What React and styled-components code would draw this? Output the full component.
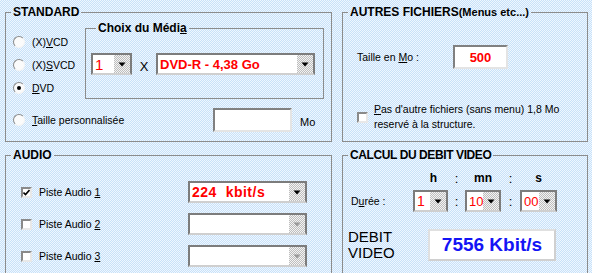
import React from 'react';
import styled, { createGlobalStyle } from 'styled-components';

const GlobalStyle = createGlobalStyle`
  html, body { margin: 0; padding: 0; }
  body { font-family: "Liberation Sans", Arial, sans-serif; }
`;

const Window = styled.div`
  width: 592px;
  height: 273px;
  overflow: hidden;
  box-sizing: border-box;
  padding: 5px 4px 0 5px;
  display: grid;
  grid-template-columns: 327px 246px;
  grid-template-rows: 137px 140px;
  column-gap: 10px;
  row-gap: 6px;
  background-color: #dbeaf9;
  background-image: repeating-conic-gradient(#c8e1f8 0 25%, #eff7ff 0 50%);
  background-size: 2px 2px;
  font-size: 10.5px;
  color: #000;
`;

const Group = styled.fieldset`
  margin: 0;
  padding: 0;
  min-width: 0;
  height: 100%;
  box-sizing: border-box;
  border: 1px solid #8c8c8c;
`;

const Legend = styled.legend`
  margin-left: 5px;
  padding: 0 2px;
  font: bold 12px/14px "Liberation Sans", Arial, sans-serif;
  letter-spacing: ${(p) => (p.$tight ? '-0.4px' : '0')};
  white-space: nowrap;
`;

const Small = styled.span`
  font-size: 11px;
`;

/* ---------- controls ---------- */

const SelectBox = styled.div`
  width: ${(p) => p.$width}px;
  height: 22px;
  box-sizing: border-box;
  display: flex;
  background: #fff;
  border: 2px solid;
  border-color: #7c7c7c #7c7c7c #cfcfcf #7c7c7c;
`;

const SelectValue = styled.div`
  flex: 1;
  display: flex;
  align-items: center;
  padding-left: 2px;
  overflow: hidden;
  white-space: pre;
  color: #ff0000;
  font-size: ${(p) => p.$size || 13}px;
  font-weight: ${(p) => (p.$bold ? 'bold' : 'normal')};
  letter-spacing: ${(p) => p.$spacing || 0}px;
`;

const SelectButton = styled.div`
  width: 16px;
  display: flex;
  align-items: center;
  justify-content: center;
  background-color: #dcdcdc;
  background-image: repeating-conic-gradient(#bdbdbd 0 25%, #f4f4f4 0 50%);
  background-size: 2px 2px;
`;

const Arrow = ({ disabled }) => (
  <svg width="8" height="5" viewBox="0 0 8 5">
    <polygon points="0.5,0.5 7.5,0.5 4,4.5" fill={disabled ? '#9a9a9a' : '#000'} />
  </svg>
);

const Select = ({ width, value, size, bold, spacing, disabled }) => (
  <SelectBox $width={width}>
    <SelectValue $size={size} $bold={bold} $spacing={spacing}>
      {value}
    </SelectValue>
    <SelectButton>
      <Arrow disabled={disabled} />
    </SelectButton>
  </SelectBox>
);

const TextBox = styled.div`
  width: ${(p) => p.$width}px;
  height: 24px;
  box-sizing: border-box;
  display: flex;
  align-items: center;
  justify-content: center;
  background: #fff;
  border: 2px solid;
  border-color: #808080 #e4e4e4 #e4e4e4 #808080;
  color: #ff0000;
  font-weight: bold;
  font-size: 13px;
`;

const RadioCircle = styled.span`
  width: 12px;
  height: 12px;
  box-sizing: border-box;
  border-radius: 50%;
  border: 1px solid;
  border-color: #8a8a8a #f4f4f4 #f4f4f4 #8a8a8a;
  background: #fbfbfb;
  display: flex;
  align-items: center;
  justify-content: center;
  flex-shrink: 0;

  &::after {
    content: '';
    width: 4px;
    height: 4px;
    border-radius: 50%;
    background: ${(p) => (p.$checked ? '#000' : 'transparent')};
  }
`;

const CheckSquare = styled.span`
  width: 11px;
  height: 11px;
  box-sizing: border-box;
  border: 2px solid;
  border-color: #8a8a8a #e8e8e8 #e8e8e8 #8a8a8a;
  background: #fff;
  display: flex;
  align-items: center;
  justify-content: center;
  flex-shrink: 0;
`;

const Check = ({ checked }) => (
  <CheckSquare>
    {checked && (
      <svg width="7" height="7" viewBox="0 0 7 7">
        <polyline points="0.5,3.5 2.5,5.5 6.5,1" fill="none" stroke="#000" strokeWidth="1.6" />
      </svg>
    )}
  </CheckSquare>
);

/* ---------- STANDARD ---------- */

const StandardBody = styled.div`
  display: flex;
  padding-left: 7px;
`;

const RadioColumn = styled.div`
  width: 72px;
  padding-top: 11px;
  display: flex;
  flex-direction: column;
`;

const RadioRow = styled.label`
  height: 23px;
  display: flex;
  align-items: center;
  gap: 7px;
  white-space: nowrap;
  flex: ${(p) => (p.$grow ? 1 : 'none')};
`;

const MediaGroup = styled.fieldset`
  margin: 2px 0 0;
  width: 239px;
  box-sizing: border-box;
  min-width: 0;
  padding: 18px 0 23px 5px;
  border: 1px solid #8c8c8c;
`;

const MediaRow = styled.div`
  display: flex;
  align-items: center;
`;

const Times = styled.span`
  width: 24px;
  text-align: center;
  font-size: 13px;
  padding-top: 4px;
`;

const CustomRow = styled.div`
  margin-top: 9px;
  padding-left: 7px;
  height: 24px;
  display: flex;
  align-items: center;
`;

const Unit = styled.span`
  width: 31px;
  margin-left: 8px;
  padding-top: 4px;
  font-size: 11px;
`;

/* ---------- AUTRES FICHIERS ---------- */

const SizeRow = styled.div`
  margin-top: 26px;
  padding-left: 14px;
  display: flex;
  align-items: center;
`;

const FieldLabel = styled.span`
  width: ${(p) => p.$width}px;
  flex-shrink: 0;
`;

const NoteRow = styled.label`
  margin-top: 33px;
  padding-left: 14px;
  display: flex;
  align-items: center;
  gap: 6px;
  line-height: 15px;
`;

/* ---------- AUDIO ---------- */

const AudioList = styled.div`
  padding: 19px 0 0 15px;
  display: flex;
  flex-direction: column;
  gap: 10px;
`;

const AudioRow = styled.div`
  display: flex;
  align-items: center;
  height: 22px;
`;

const AudioLabel = styled.label`
  width: 167px;
  display: flex;
  align-items: center;
  gap: 7px;
`;

/* ---------- CALCUL ---------- */

const TimeGrid = styled.div`
  margin-top: 9px;
  padding-left: 8px;
  display: grid;
  grid-template-columns: 62px 35px 17px 36px 19px 37px;
  grid-template-rows: 14px 22px;
  row-gap: 5px;
  align-items: center;
`;

const TimeHead = styled.span`
  justify-self: center;
  font-weight: bold;
  font-size: 12px;
  padding-left: ${(p) => p.$shift || 0}px;
`;

const Colon = styled.span`
  justify-self: center;
  font-size: 13px;
`;

const RateRow = styled.div`
  margin-top: 17px;
  padding-left: 5px;
  display: flex;
  align-items: center;
`;

const RateLabel = styled.div`
  width: 80px;
  font-size: 15px;
  line-height: 16px;
`;

const RateBox = styled.div`
  width: 128px;
  height: 32px;
  box-sizing: border-box;
  display: flex;
  align-items: center;
  justify-content: center;
  background: #fff;
  border: 2px solid;
  border-color: #e0e0e0 #d0d0d0 #d0d0d0 #e0e0e0;
  color: #1414f5;
  font-weight: bold;
  font-size: 19px;
`;

export default function App() {
  return (
    <>
      <GlobalStyle />
      <Window>
        <Group>
          <Legend>STANDARD</Legend>
          <StandardBody>
            <RadioColumn>
              <RadioRow>
                <RadioCircle />
                <span>(X)<u>V</u>CD</span>
              </RadioRow>
              <RadioRow>
                <RadioCircle />
                <span>(X)<u>S</u>VCD</span>
              </RadioRow>
              <RadioRow>
                <RadioCircle $checked />
                <span><u>D</u>VD</span>
              </RadioRow>
            </RadioColumn>
            <MediaGroup>
              <Legend>Choix du Médi<u>a</u></Legend>
              <MediaRow>
                <Select width={41} value="1" size={15} />
                <Times>X</Times>
                <Select width={159} value="DVD-R - 4,38 Go" size={13} bold />
              </MediaRow>
            </MediaGroup>
          </StandardBody>
          <CustomRow>
            <RadioRow $grow>
              <RadioCircle />
              <span><u>T</u>aille personnalisée</span>
            </RadioRow>
            <TextBox $width={79} />
            <Unit>Mo</Unit>
          </CustomRow>
        </Group>

        <Group>
          <Legend>
            AUTRES FICHIERS<Small>(Menus etc...)</Small>
          </Legend>
          <SizeRow>
            <FieldLabel $width={96}>Taille en <u>M</u>o :</FieldLabel>
            <TextBox $width={55}>500</TextBox>
          </SizeRow>
          <NoteRow>
            <Check />
            <span>
              <u>P</u>as d'autre fichiers (sans menu) 1,8 Mo
              <br />
              reservé à la structure.
            </span>
          </NoteRow>
        </Group>

        <Group>
          <Legend>AUDIO</Legend>
          <AudioList>
            <AudioRow>
              <AudioLabel>
                <Check checked />
                <span>Piste Audio <u>1</u></span>
              </AudioLabel>
              <Select width={119} value="224  kbit/s" size={14} bold spacing={0.5} />
            </AudioRow>
            <AudioRow>
              <AudioLabel>
                <Check />
                <span>Piste Audio <u>2</u></span>
              </AudioLabel>
              <Select width={119} value="" disabled />
            </AudioRow>
            <AudioRow>
              <AudioLabel>
                <Check />
                <span>Piste Audio <u>3</u></span>
              </AudioLabel>
              <Select width={119} value="" disabled />
            </AudioRow>
          </AudioList>
        </Group>

        <Group>
          <Legend $tight>CALCUL DU DEBIT VIDEO</Legend>
          <TimeGrid>
            <span />
            <TimeHead $shift={6}>h</TimeHead>
            <Colon>:</Colon>
            <TimeHead>mn</TimeHead>
            <Colon>:</Colon>
            <TimeHead>s</TimeHead>

            <span>D<u>u</u>rée :</span>
            <Select width={35} value="1" size={14} />
            <Colon>:</Colon>
            <Select width={36} value="10" size={13} />
            <Colon>:</Colon>
            <Select width={37} value="00" size={13} />
          </TimeGrid>
          <RateRow>
            <RateLabel>
              DEBIT
              <br />
              VIDEO
            </RateLabel>
            <RateBox>7556 Kbit/s</RateBox>
          </RateRow>
        </Group>
      </Window>
    </>
  );
}
